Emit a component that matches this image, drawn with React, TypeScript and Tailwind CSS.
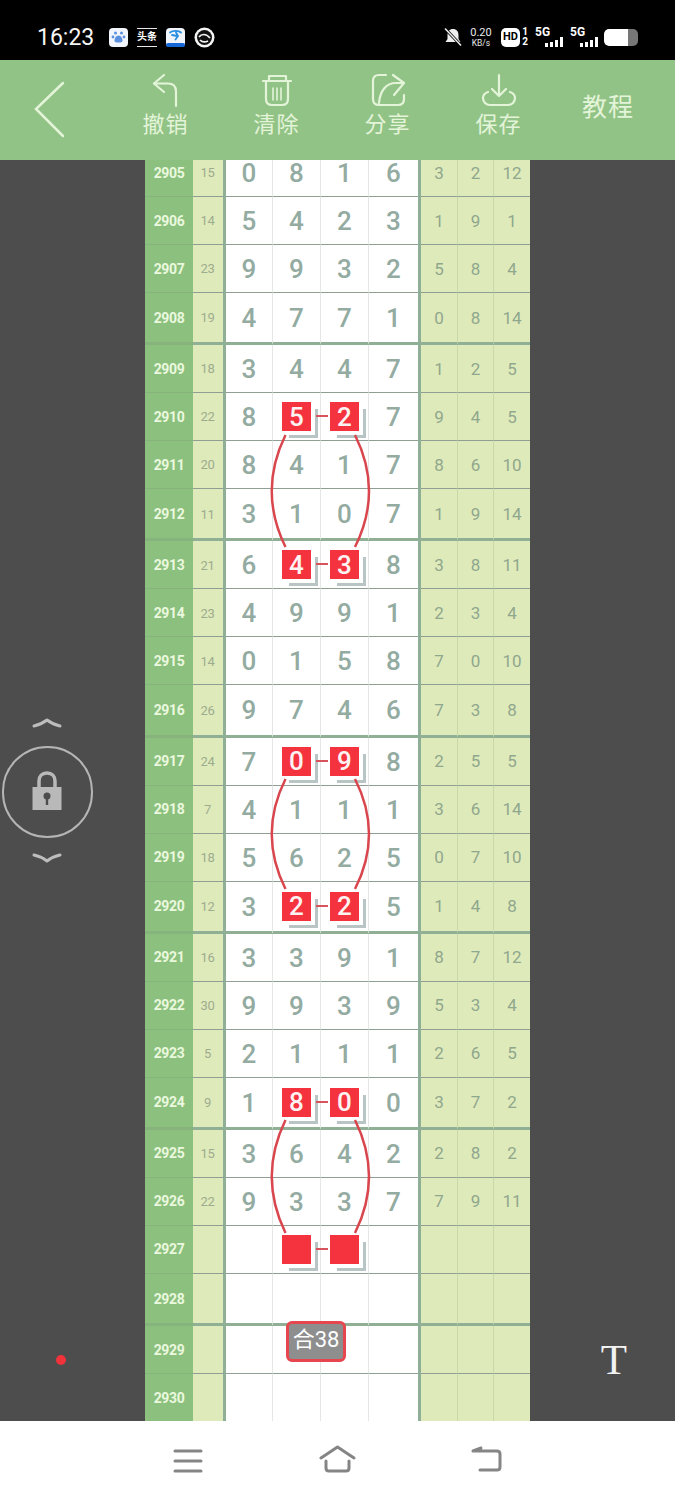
import React from "react";

type RowData = { no: number; sum?: number; d?: number[]; r?: number[] };

// no, sum, four digits, three right-hand values
const raw: [number, number, string, number[]][] = [
  [2905, 15, "0816", [3, 2, 12]],
  [2906, 14, "5423", [1, 9, 1]],
  [2907, 23, "9932", [5, 8, 4]],
  [2908, 19, "4771", [0, 8, 14]],
  [2909, 18, "3447", [1, 2, 5]],
  [2910, 22, "8527", [9, 4, 5]],
  [2911, 20, "8417", [8, 6, 10]],
  [2912, 11, "3107", [1, 9, 14]],
  [2913, 21, "6438", [3, 8, 11]],
  [2914, 23, "4991", [2, 3, 4]],
  [2915, 14, "0158", [7, 0, 10]],
  [2916, 26, "9746", [7, 3, 8]],
  [2917, 24, "7098", [2, 5, 5]],
  [2918, 7, "4111", [3, 6, 14]],
  [2919, 18, "5625", [0, 7, 10]],
  [2920, 12, "3225", [1, 4, 8]],
  [2921, 16, "3391", [8, 7, 12]],
  [2922, 30, "9939", [5, 3, 4]],
  [2923, 5, "2111", [2, 6, 5]],
  [2924, 9, "1800", [3, 7, 2]],
  [2925, 15, "3642", [2, 8, 2]],
  [2926, 22, "9337", [7, 9, 11]],
];

const hotRows = [2910, 2913, 2917, 2920, 2924, 2927];

const rows: RowData[] = [
  ...raw.map(([no, sum, d, r]) => ({ no, sum, d: d.split("").map(Number), r })),
  { no: 2927 },
  { no: 2928 },
  { no: 2929 },
  { no: 2930 },
];

function Tile({ value, dash }: { value?: number; dash?: boolean }) {
  return (
    <div className="relative mt-[-1px] flex h-[29px] w-[29px] items-center justify-center bg-[#f5333f] text-[26px] leading-none font-medium text-[#fdf3f3] shadow-[4px_4px_0_#ffffff,7px_7px_0_#b9c4c4]">
      {value}
      {dash && <div className="absolute top-[13px] left-[34px] h-[2px] w-[12px] bg-[#d9535c]" />}
    </div>
  );
}

function Row({ row }: { row: RowData }) {
  const last = (row.no - 2904) % 4 === 0;
  const line = last ? "border-b-[3px] border-[#8fb094]" : "border-b border-[#8f9f94]";
  const hot = hotRows.includes(row.no);
  const widths = ["w-[47px]", "w-[48px]", "w-[48px]", "w-[49px]"];
  const rightWidths = ["w-[37px]", "w-[36px]", "w-[36px]"];
  return (
    <div className={`flex shrink-0 ${last ? "h-[52.2px]" : "h-[48px]"}`}>
      <div className={`flex w-[48px] items-center justify-center bg-[#8cc07e] pt-[1px] text-[14px] font-bold tracking-[-0.4px] text-[#eaf8de] ${last ? "border-b-[3px] border-[#86b47c]" : "border-b border-[#86b47c]"}`}>
        {row.no}
      </div>
      <div className={`flex w-[33px] items-center justify-center border-r-[3px] border-r-[#8fb096] bg-[#dfeabb] pt-[1px] pr-[1px] text-[13px] tracking-[-0.3px] text-[#9dac8e] ${line}`}>
        {row.sum}
      </div>
      {widths.map((w, i) => {
        const val = row.d ? row.d[i] : undefined;
        const isTile = hot && (i === 1 || i === 2);
        return (
          <div key={i} className={`flex ${w} items-center justify-center bg-white pt-[1px] text-[26px] leading-[24px] font-medium text-[#93aba1] ${line} ${i < 3 ? "border-r border-r-[#e4e7e6]" : ""}`}>
            {isTile ? <Tile value={val} dash={i === 1} /> : val}
          </div>
        );
      })}
      <div className="w-[3px] bg-[#8fb096]" />
      {rightWidths.map((w, i) => (
        <div key={i} className={`flex ${w} items-center justify-center bg-[#dfeabb] pt-[1px] text-[17px] leading-none text-[#8fa78c] ${line} ${i < 2 ? "border-r border-r-[#c9d8a8]" : ""}`}>
          {row.r ? row.r[i] : ""}
        </div>
      ))}
    </div>
  );
}

function Arcs({ top, bottom }: { top: number; bottom: number }) {
  const mid = (top + bottom) / 2;
  return (
    <>
      <path d={`M285.5 ${top} Q258 ${mid} 285.5 ${bottom}`} />
      <path d={`M355 ${top} Q383 ${mid} 355 ${bottom}`} />
    </>
  );
}

function ToolButton({ label, children }: { label: string; children: React.ReactNode }) {
  return (
    <div className="flex w-[111px] flex-col items-center pt-[12px]">
      <svg width="40" height="40" viewBox="0 0 40 40" fill="none" stroke="#e3f4d9" strokeWidth="2.2" strokeLinecap="round" strokeLinejoin="round">
        {children}
      </svg>
      <span className="mt-[-1px] text-[22px] leading-[28px] tracking-[1px] text-[#e3f4d9]">{label}</span>
    </div>
  );
}

function StatusIcons() {
  return (
    <div className="ml-[14px] flex items-center gap-[9px]">
      <svg width="19" height="19" viewBox="0 0 19 19">
        <rect width="19" height="19" rx="4" fill="#f2f5fb" />
        <g fill="#5b8fe0">
          <circle cx="6.500" cy="5" r="1.500" />
          <circle cx="12.500" cy="5" r="1.500" />
          <circle cx="4" cy="9" r="1.400" />
          <circle cx="15" cy="9" r="1.400" />
          <path d="M9.500 7.500c2.500 0 4 3 4 5s-2 2-4 2-4 0-4-2 1.500-5 4-5z" />
        </g>
      </svg>
      <div className="flex h-[19px] w-[20px] flex-col justify-center border-y border-[#e6e6e6] bg-black text-center text-[10px] leading-none font-bold text-white">
        头条
      </div>
      <svg width="19" height="19" viewBox="0 0 19 19">
        <rect width="19" height="19" rx="4" fill="#f2f6fc" />
        <rect y="15" width="19" height="4" rx="2" fill="#1668d8" />
        <path d="M4 4.500c3-2.500 9-2 11 0M10 4.500l2 3.500-2.500 3.500M6 7l5 1" fill="none" stroke="#2b8fe0" strokeWidth="1.800" strokeLinecap="round" />
      </svg>
      <svg width="21" height="21" viewBox="0 0 21 21">
        <circle cx="10.500" cy="10.500" r="10" fill="#f4f4f4" />
        <circle cx="10.500" cy="10.500" r="7.500" fill="#111" />
        <path d="M5 10c2-3 7-4 11 1M6 13c2 2 5 2.500 8 1" fill="none" stroke="#f4f4f4" strokeWidth="1.700" />
      </svg>
    </div>
  );
}

function Signal({ x }: { x: string }) {
  return (
    <div className={`relative h-[22px] w-[28px] ${x} text-white`}>
      <span className="absolute top-[0px] left-0 text-[12px] leading-[13px] font-bold">5G</span>
      <div className="absolute right-0 bottom-[1px] flex items-end gap-[2px]">
        <div className="h-[4px] w-[3px] bg-white" />
        <div className="h-[5px] w-[3px] bg-white" />
        <div className="h-[7px] w-[3px] bg-white" />
        <div className="h-[10px] w-[3px] bg-white" />
      </div>
    </div>
  );
}

export default function App() {
  return (
    <div className="flex h-[1500px] w-[675px] flex-col overflow-hidden bg-black font-['Roboto','Noto_Sans_CJK_SC',sans-serif]">
      {/* status bar */}
      <div className="flex h-[60px] shrink-0 items-center justify-between pt-[14px] pr-[37px] pl-[37px] text-white">
        <div className="flex items-center">
          <span className="w-[58px] text-[23px] leading-none text-[#f5f5f5]">16:23</span>
          <StatusIcons />
        </div>
        <div className="flex items-center">
          <svg width="20" height="20" viewBox="0 0 20 20" fill="#eee" className="mr-[6px]">
            <path d="M10 2c3.500 0 5.500 2.500 5.500 6v4l2 3H2.500l2-3V8c0-3.500 2-6 5.500-6z" />
            <path d="M2 1.500l16 17" stroke="#000" strokeWidth="3" />
            <path d="M2 1.500l16 17" stroke="#eee" strokeWidth="1.500" />
          </svg>
          <div className="mr-[8px] flex w-[24px] flex-col items-center text-[11px] leading-[11px] text-[#e8e8e8]">
            <span>0.20</span>
            <span className="text-[8.500px] leading-[10px]">KB/s</span>
          </div>
          <div className="flex h-[19px] w-[19px] items-center justify-center rounded-[5px] bg-white text-[11px] font-bold text-black">HD</div>
          <div className="mr-[6px] ml-[1px] flex w-[8px] flex-col text-center text-[10px] leading-[10px] font-bold">
            <span>1</span>
            <span>2</span>
          </div>
          <Signal x="mr-[7px]" />
          <Signal x="mr-[6px]" />
          <div className="flex h-[17px] w-[34px] overflow-hidden rounded-[5px] bg-[#777]">
            <div className="h-full w-[24px] rounded-l-[5px] bg-white" />
          </div>
        </div>
      </div>

      {/* header */}
      <div className="flex h-[100px] shrink-0 bg-[#92c386]">
        <div className="flex w-[110px] items-center pl-[34px]">
          <svg width="32" height="60" viewBox="0 0 32 60" fill="none" stroke="#e3f4d9" strokeWidth="2.500" strokeLinecap="round">
            <path d="M29 3L2 29l27 27" />
          </svg>
        </div>
        <ToolButton label="撤销">
          <path d="M18 3L8 11.500l10 8.500" />
          <path d="M8 11.500h14c5 0 8 3 8 8V34" />
        </ToolButton>
        <ToolButton label="清除">
          <path d="M6 9h28M12 9V4h17v5" />
          <path d="M9 9v18c0 4 2 6 6 6h10c4 0 6-2 6-6V9" />
          <path d="M16 16v12M20 16v12M24 16v12" strokeWidth="1.600" />
        </ToolButton>
        <ToolButton label="分享">
          <path d="M18 3h-7c-4 0-6 2-6 6v18c0 4 2 6 6 6h19c4 0 6-2 6-6v-4" />
          <path d="M25 3l11 8-10 12" />
          <path d="M36 11h-8c-10 0-16 8-17 20" />
        </ToolButton>
        <ToolButton label="保存">
          <path d="M20 3v21M13 17l7 7 7-7" />
          <path d="M9 20c-3 1-5 3-5 6 0 4 3 7 7 7h18c4 0 7-3 7-7 0-3-2-5-5-6" />
        </ToolButton>
        <div className="flex w-[108px] items-center justify-center pb-[4px] text-[25px] tracking-[1px] text-[#e3f4d9]">教程</div>
      </div>

      {/* main area */}
      <div className="flex h-[1261px] shrink-0 bg-[#4d4d4d]">
        <div className="flex w-[145px] flex-col pt-[557px] pl-[2px]">
          <div className="flex w-[90px] flex-col items-center">
            <svg width="30" height="12" viewBox="0 0 30 12" fill="none" stroke="#bdbdbd" strokeWidth="3" strokeLinecap="round" strokeLinejoin="round">
              <path d="M2 9c5-1 9-3 13-6 4 3 8 5 13 6" />
            </svg>
            <div className="mt-[17px] flex h-[92px] w-[91px] shrink-0 items-center justify-center rounded-full border-[2px] border-[#b5b5b5] pb-[4px]">
              <svg width="30" height="40" viewBox="0 0 30 40">
                <path d="M7 18V11c0-5 3-8 8-8s8 3 8 8v7" fill="none" stroke="#b9b9b9" strokeWidth="3.500" />
                <rect x="0.500" y="17" width="29" height="23" fill="#b9b9b9" />
                <circle cx="15" cy="26" r="3.500" fill="#4d4d4d" />
                <rect x="13.800" y="27" width="2.400" height="8" fill="#4d4d4d" />
              </svg>
            </div>
            <svg className="mt-[14px]" width="30" height="12" viewBox="0 0 30 12" fill="none" stroke="#bdbdbd" strokeWidth="3" strokeLinecap="round" strokeLinejoin="round">
              <path d="M2 3c5 1 9 3 13 6 4-3 8-5 13-6" />
            </svg>
          </div>
          <div className="mt-[491px] ml-[54px] h-[10px] w-[10px] rounded-full bg-[#f0333b]" />
        </div>

        <div className="relative h-full w-[385px] overflow-hidden">
          <div className="mt-[-11px] flex flex-col">
            {rows.map((row) => (
              <Row key={row.no} row={row} />
            ))}
          </div>
          <svg className="pointer-events-none absolute inset-0 h-full w-full" viewBox="145 160 385 1261" fill="none" stroke="#d9464e" strokeWidth="2.500">
            <Arcs top={435} bottom={547} />
            <Arcs top={779} bottom={889} />
            <Arcs top={1120} bottom={1233} />
          </svg>
          <div className="absolute top-[1161px] left-[141px] flex h-[41px] w-[60px] items-center justify-center rounded-[6px] border-[3px] border-[#e6474f] bg-[#8e8e8e] pb-[3px] text-[22px] leading-none text-white">
            合38
          </div>
        </div>

        <div className="flex w-[145px] flex-col items-end pt-[1178px] pr-[48px]">
          <span className="font-['Liberation_Serif',serif] text-[43px] leading-none text-[#f2f2f2]">T</span>
        </div>
      </div>

      {/* nav bar */}
      <div className="flex h-[79px] shrink-0 items-start bg-white pt-[24px]">
        <div className="mt-[3px] ml-[173px]">
          <svg width="30" height="26" viewBox="0 0 30 26" fill="none" stroke="#858585" strokeWidth="3" strokeLinecap="round">
            <path d="M2 3h26M2 13h26M2 23h26" />
          </svg>
        </div>
        <div className="ml-[116px]">
          <svg width="38" height="30" viewBox="0 0 38 30" fill="none" stroke="#858585" strokeWidth="3" strokeLinecap="round" strokeLinejoin="round">
            <path d="M2 13L18.500 2 35 13" />
            <path d="M7 16v7c0 2 1 3 3 3h17c2 0 3-1 3-3v-7" />
          </svg>
        </div>
        <div className="ml-[114px]">
          <svg width="32" height="28" viewBox="0 0 32 28" fill="none" stroke="#858585" strokeWidth="3" strokeLinecap="round" strokeLinejoin="round">
            <path d="M2 6l8-3M2 6h24c2 0 3 1 3 3v13c0 2-1 3-3 3H9" />
          </svg>
        </div>
      </div>
    </div>
  );
}
